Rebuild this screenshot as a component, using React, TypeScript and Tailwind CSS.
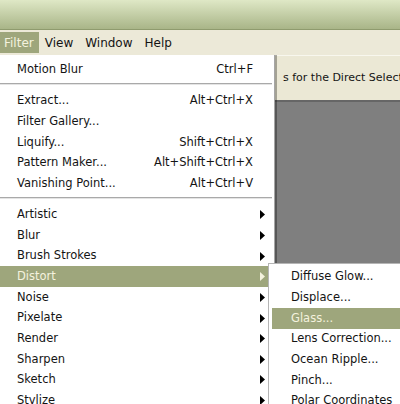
import React from "react";

type Item =
    | { kind: "item"; label: string; shortcut?: string; sub?: boolean; active?: boolean }
    | { kind: "sep" };

const filterMenu: Item[] = [
    { kind: "item", label: "Motion Blur", shortcut: "Ctrl+F" },
    { kind: "sep" },
    { kind: "item", label: "Extract...", shortcut: "Alt+Ctrl+X" },
    { kind: "item", label: "Filter Gallery..." },
    { kind: "item", label: "Liquify...", shortcut: "Shift+Ctrl+X" },
    { kind: "item", label: "Pattern Maker...", shortcut: "Alt+Shift+Ctrl+X" },
    { kind: "item", label: "Vanishing Point...", shortcut: "Alt+Ctrl+V" },
    { kind: "sep" },
    { kind: "item", label: "Artistic", sub: true },
    { kind: "item", label: "Blur", sub: true },
    { kind: "item", label: "Brush Strokes", sub: true },
    { kind: "item", label: "Distort", sub: true, active: true },
    { kind: "item", label: "Noise", sub: true },
    { kind: "item", label: "Pixelate", sub: true },
    { kind: "item", label: "Render", sub: true },
    { kind: "item", label: "Sharpen", sub: true },
    { kind: "item", label: "Sketch", sub: true },
    { kind: "item", label: "Stylize", sub: true },
];

const distortMenu = [
    "Diffuse Glow...",
    "Displace...",
    "Glass...",
    "Lens Correction...",
    "Ocean Ripple...",
    "Pinch...",
    "Polar Coordinates",
];

const Arrow: React.FC<{ light?: boolean }> = ({ light }) => (
    <svg width="5" height="9" viewBox="0 0 5 9" className="mr-[9px] shrink-0">
        <polygon points="0,0 5,4.5 0,9" fill={light ? "#f4f2de" : "#000"} />
    </svg>
);

const App: React.FC = () => {
    return (
        <div className="relative w-[400px] h-[404px] overflow-hidden flex flex-col bg-[#7f7f7f] font-['DejaVu_Sans',sans-serif] text-[#141414]">
            {/* title strip */}
            <div className="h-[30px] shrink-0 bg-gradient-to-b from-[#dfe8c6] to-[#a9b588] border-b border-[#8f9b6e]" />

            {/* menu bar */}
            <div className="h-[25px] shrink-0 bg-[#ece9d8] flex items-center text-[12px]">
                <div className="h-[21px] flex items-center pl-1 pr-[5px] bg-[#9ea67c] text-[#f4f2de]">Filter</div>
                <div className="h-[21px] flex items-center px-[6px]">View</div>
                <div className="h-[21px] flex items-center px-[6px]">Window</div>
                <div className="h-[21px] flex items-center px-[6px]">Help</div>
            </div>

            {/* options bar */}
            <div className="h-[45px] shrink-0 bg-[#ebe8d5] border-t border-[#f8f7ee] flex items-center pl-[283px] text-[11px] whitespace-nowrap overflow-hidden">
                s for the Direct Selection
            </div>

            {/* canvas */}
            <div className="flex-1 bg-[#7f7f7f] border-t-2 border-[#666]" />

            {/* Filter dropdown */}
            <div className="absolute left-0 top-[55px] w-[275px] h-[360px] bg-white border-r border-[#a6a6a6] shadow-[2px_0_0_rgba(0,0,0,0.3)] pt-[4.7px] text-[11.5px]">
                {filterMenu.map((it, i) =>
                    it.kind === "sep" ? (
                        <div key={i} className="h-[10.4px] pt-[3px] mr-[2px]">
                            <div className="h-px bg-[#a9a9a9]" />
                            <div className="h-px bg-[#e4e4e4]" />
                        </div>
                    ) : (
                        <div
                            key={i}
                            className={`h-[20.67px] flex items-center pl-[17px] ${
                                it.active ? "bg-[#9ea67c] text-[#f4f2de]" : ""
                            }`}
                        >
                            <span className="flex-1 whitespace-nowrap">{it.label}</span>
                            {it.shortcut && <span className="pr-[21px] whitespace-nowrap">{it.shortcut}</span>}
                            {it.sub && <Arrow light={it.active} />}
                        </div>
                    )
                )}
            </div>

            {/* Distort submenu */}
            <div className="absolute left-[268px] top-[263px] w-[140px] h-[160px] bg-white border-l border-t border-[#b5b5b5] pt-[2.7px] text-[11.5px]">
                {distortMenu.map((label) => (
                    <div
                        key={label}
                        className={`h-[20.67px] flex items-center whitespace-nowrap ${
                            label === "Glass..."
                                ? "ml-[3px] pl-[19px] bg-[#9ea67c] text-[#f4f2de]"
                                : "pl-[22px]"
                        }`}
                    >
                        {label}
                    </div>
                ))}
            </div>
        </div>
    );
};

export default App;
